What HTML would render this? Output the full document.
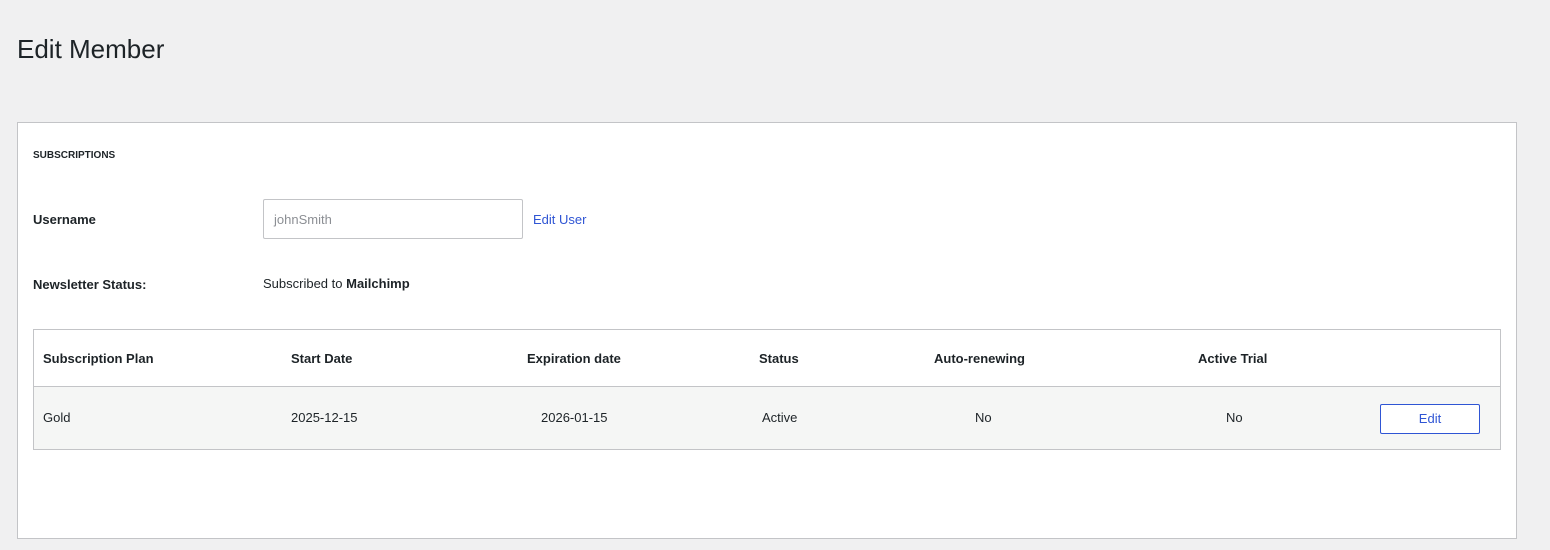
<!DOCTYPE html>
<html><head><meta charset="utf-8"><style>
body{margin:0;width:1550px;height:550px;background:#f0f0f1;font-family:"Liberation Sans",sans-serif;color:#1d2327;position:relative;overflow:hidden}
.a{position:absolute;white-space:nowrap}
h1{position:absolute;left:17px;top:32px;margin:0;font-weight:400;font-size:26px;line-height:34px;color:#1d2327}
.panel{position:absolute;left:17px;top:122px;width:1498px;height:415px;background:#fff;border:1px solid #c3c4c7}
.b{font-weight:bold}
.tbl{position:absolute;left:33px;top:329px;width:1466px;height:119px;border:1px solid #c3c4c7;background:#fff;overflow:hidden}
.row{position:absolute;left:0;top:56px;width:1466px;height:63px;box-sizing:border-box;background:#f5f6f5;border-top:1px solid #c3c4c7}
.t{font-size:13px}
</style></head><body>
<h1>Edit Member</h1>
<div class="panel"></div>
<div class="a b" style="left:33px;top:150px;font-size:10px">SUBSCRIPTIONS</div>
<div class="a b t" style="left:33px;top:212px">Username</div>
<div class="a" style="left:263px;top:199px;width:258px;height:38px;border:1px solid #c3c4c7;border-radius:2px"></div>
<div class="a t" style="left:274px;top:212px;color:#8c8f94">johnSmith</div>
<div class="a t" style="left:533px;top:212px;color:#2f55d4">Edit User</div>
<div class="a b t" style="left:33px;top:277px">Newsletter Status:</div>
<div class="a t" style="left:263px;top:276px">Subscribed to <b>Mailchimp</b></div>
<div class="tbl"><div class="row"></div></div>
<div class="a b t" style="left:43px;top:351px">Subscription Plan</div>
<div class="a b t" style="left:291px;top:351px">Start Date</div>
<div class="a b t" style="left:527px;top:351px">Expiration date</div>
<div class="a b t" style="left:759px;top:351px">Status</div>
<div class="a b t" style="left:934px;top:351px">Auto-renewing</div>
<div class="a b t" style="left:1198px;top:351px">Active Trial</div>
<div class="a t" style="left:43px;top:410px">Gold</div>
<div class="a t" style="left:291px;top:410px">2025-12-15</div>
<div class="a t" style="left:541px;top:410px">2026-01-15</div>
<div class="a t" style="left:762px;top:410px">Active</div>
<div class="a t" style="left:975px;top:410px">No</div>
<div class="a t" style="left:1226px;top:410px">No</div>
<div class="a t" style="left:1380px;top:404px;width:98px;height:28px;border:1px solid #2f55d4;border-radius:2px;background:#fff;color:#2f55d4;text-align:center;line-height:28px">Edit</div>
</body></html>
